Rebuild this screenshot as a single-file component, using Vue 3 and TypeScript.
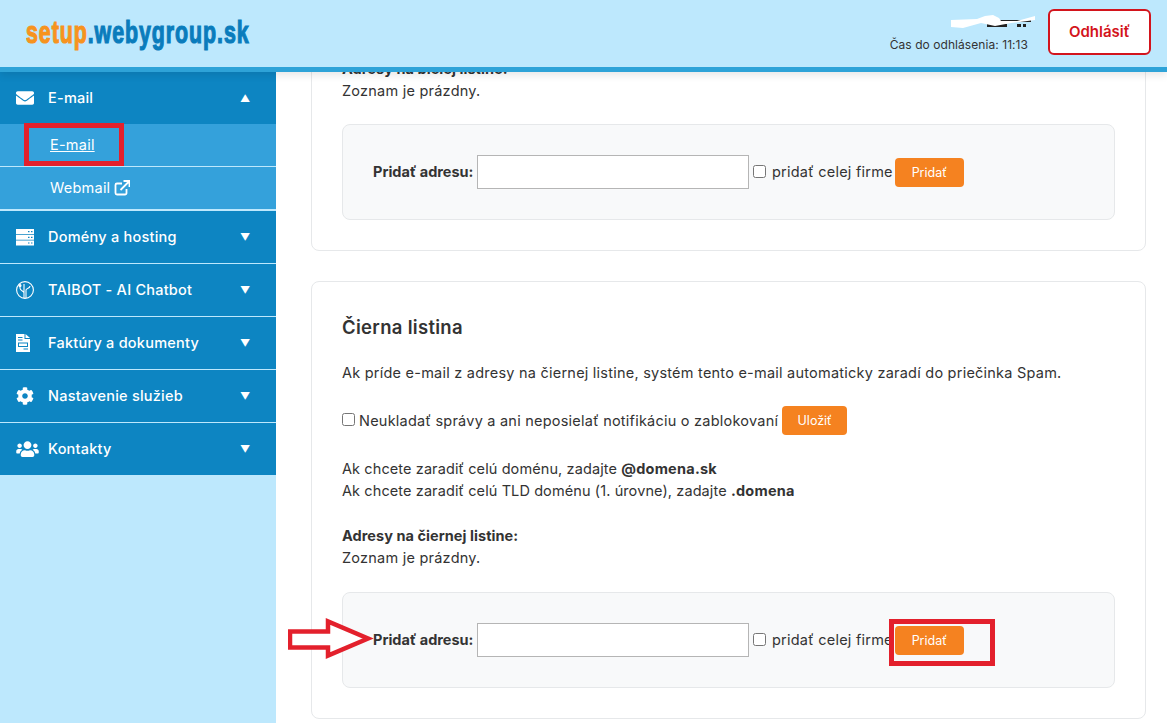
<script setup lang="ts">
interface MenuItem { label: string; icon: string }
const menus: MenuItem[] = [
  { label: 'Domény a hosting', icon: 'server' },
  { label: 'TAIBOT - AI Chatbot', icon: 'bot' },
  { label: 'Faktúry a dokumenty', icon: 'file' },
  { label: 'Nastavenie služieb', icon: 'cog' },
  { label: 'Kontakty', icon: 'users' },
]
</script>

<template>
  <div class="page">
    <header class="top">
      <div class="logo"><span class="o">setup</span><span class="b">.webygroup.sk</span></div>
      <div class="top-right">
        <div class="user">
          <svg class="redact" width="84" height="14" viewBox="0 0 84 14">
            <rect x="34" y="5" width="46" height="2" fill="#222" />
            <rect x="36" y="9" width="20" height="3" fill="#222" />
            <rect x="66" y="9" width="4" height="3" fill="#222" />
            <rect x="72" y="9" width="3" height="3" fill="#222" />
            <path d="M0 5 L26 4 L34 1 L42 0 L48 3 L50 6 L66 6 L84 1 L84 5 L60 8 L44 11 L30 8 L12 13 L0 12 Z" fill="#fff" />
          </svg>
          <div class="timer">Čas do odhlásenia: 11:13</div>
        </div>
        <button class="logout">Odhlásiť</button>
      </div>
    </header>

    <div class="body">
      <aside class="side">
        <div class="row">
          <svg class="ic" viewBox="0 0 512 512" fill="#fff"><path d="M502.3 190.8c3.9-3.1 9.7-.2 9.7 4.7V400c0 26.5-21.5 48-48 48H48c-26.5 0-48-21.5-48-48V195.6c0-5 5.7-7.8 9.7-4.7 22.4 17.4 52.1 39.5 154.1 113.6 21.1 15.4 56.7 47.8 92.2 47.6 35.7.3 72-32.8 92.3-47.6 102-74.1 131.6-96.3 154-113.7zM256 320c23.2.4 56.6-29.2 73.4-41.4 132.7-96.3 142.8-104.7 173.4-128.7 5.8-4.5 9.2-11.5 9.2-18.9v-19c0-26.5-21.5-48-48-48H48C21.5 64 0 85.5 0 112v19c0 7.4 3.4 14.3 9.2 18.9 30.6 23.9 40.7 32.4 173.4 128.7 16.8 12.2 50.2 41.8 73.4 41.4z" /></svg>
          <span class="lbl">E-mail</span>
          <span class="arr">▲</span>
        </div>
        <a class="sub u">E-mail</a>
        <a class="sub last">Webmail
          <svg class="ext" viewBox="0 0 16 16" fill="none" stroke="#fff" stroke-width="1.8"><path d="M8 3.5H3a1.5 1.5 0 0 0-1.5 1.5v8A1.5 1.5 0 0 0 3 14.5h8a1.5 1.5 0 0 0 1.5-1.5V9" /><path d="M6.500 10 15 1.500M9.500 1h6v6" /></svg>
        </a>
        <div v-for="m in menus" :key="m.label" class="row line">
          <svg v-if="m.icon === 'server'" class="ic" viewBox="0 0 18 18" fill="#fff">
            <path fill-rule="evenodd" d="M0 1h18v5.200H0zM12 3v1.200h1.500V3zM15 3v1.200h1.500V3zM0 7h18v4.800H0zM12 8.800v1.200h1.500V8.800zM15 8.800v1.200h1.500V8.800zM0 12.600h18v4.800H0zM12 14.400v1.200h1.500v-1.200zM15 14.400v1.200h1.500v-1.200z" />
          </svg>
          <svg v-else-if="m.icon === 'bot'" class="ic" viewBox="0 0 18 18" fill="none" stroke="#fff" stroke-width="1.100">
            <circle cx="9" cy="9" r="8.400" />
            <path d="M8 17V12C8 10 4 10 4 7V5M10 17V9C10 7 14 8 14 5M8 12V3" />
            <circle cx="4" cy="4.500" r="1" fill="#fff" />
          </svg>
          <svg v-else-if="m.icon === 'file'" class="ic" viewBox="2 0 18 18" fill="#fff">
            <path fill-rule="evenodd" d="M2 0h8.500v5H16v13H2zM11.500 0 16 4h-4.500zM4 3v1h4.500V3zM4 5.500v1h4.500v-1zM4 8.500v4.500h10V8.500zM5 9.500h8V12H5zM9.500 14.500v1H14v-1z" />
          </svg>
          <svg v-else-if="m.icon === 'cog'" class="ic" viewBox="0 0 512 512" fill="#fff"><path d="M487.4 315.7l-42.6-24.6c4.3-23.2 4.3-47 0-70.2l42.6-24.6c4.9-2.8 7.1-8.6 5.5-14-11.1-35.6-30-67.8-54.7-94.6-3.8-4.1-10-5.1-14.8-2.3L380.8 110c-17.9-15.4-38.5-27.3-60.8-35.1V25.8c0-5.6-3.9-10.5-9.4-11.7-36.7-8.2-74.3-7.8-109.2 0-5.5 1.2-9.4 6.1-9.4 11.7V75c-22.2 7.9-42.8 19.8-60.8 35.1L88.7 85.500c-4.9-2.8-11-1.900-14.8 2.300-24.7 26.7-43.6 58.9-54.7 94.6-1.7 5.4.6 11.2 5.5 14L67.3 221c-4.3 23.2-4.3 47 0 70.2l-42.6 24.6c-4.9 2.8-7.1 8.6-5.5 14 11.1 35.6 30 67.8 54.7 94.6 3.8 4.1 10 5.1 14.8 2.3l42.6-24.6c17.9 15.4 38.5 27.3 60.8 35.1v49.2c0 5.6 3.9 10.5 9.4 11.7 36.7 8.2 74.3 7.8 109.2 0 5.500-1.200 9.400-6.100 9.400-11.700v-49.200c22.200-7.900 42.800-19.800 60.800-35.100l42.600 24.600c4.900 2.800 11 1.900 14.800-2.300 24.700-26.700 43.600-58.900 54.700-94.600 1.500-5.500-.7-11.300-5.600-14.100zM256 336c-44.100 0-80-35.900-80-80s35.900-80 80-80 80 35.900 80 80-35.900 80-80 80z" /></svg>
          <svg v-else class="ic wide" viewBox="0 0 640 512" fill="#fff"><path d="M96 224c35.300 0 64-28.700 64-64s-28.700-64-64-64-64 28.700-64 64 28.700 64 64 64zm448 0c35.300 0 64-28.700 64-64s-28.700-64-64-64-64 28.700-64 64 28.700 64 64 64zm32 32h-64c-17.600 0-33.500 7.100-45.100 18.600 40.300 22.100 68.900 62 75.100 109.400h66c17.700 0 32-14.300 32-32v-32c0-35.300-28.700-64-64-64zm-256 0c61.900 0 112-50.100 112-112S381.900 32 320 32 208 82.100 208 144s50.100 112 112 112zm76.800 32h-8.300c-20.800 10-43.900 16-68.500 16s-47.600-6-68.500-16h-8.300C179.600 288 128 339.600 128 403.200V432c0 26.500 21.500 48 48 48h288c26.500 0 48-21.500 48-48v-28.800c0-63.600-51.600-115.200-115.200-115.200zm-223.700-13.400C161.500 263.100 145.600 256 128 256H64c-35.300 0-64 28.700-64 64v32c0 17.700 14.300 32 32 32h65.900c6.300-47.400 34.900-87.300 75.200-109.400z" /></svg>
          <span class="lbl">{{ m.label }}</span>
          <span class="arr">▼</span>
        </div>
      </aside>

      <main class="main">
        <section class="card first">
          <p><b>Adresy na bielej listine:</b><br />Zoznam je prázdny.</p>
          <div class="panel">
            <b class="lab">Pridať adresu:</b>
            <input class="inp" type="text" />
            <input class="chk" type="checkbox" />
            <span>pridať celej firme</span>
            <button class="btn">Pridať</button>
          </div>
        </section>

        <section class="card">
          <h2>Čierna listina</h2>
          <p>Ak príde e-mail z adresy na čiernej listine, systém tento e-mail automaticky zaradí do priečinka Spam.</p>
          <div class="opt">
            <input class="chk first-chk" type="checkbox" />
            <span>Neukladať správy a ani neposielať notifikáciu o zablokovaní</span>
            <button class="btn tall">Uložiť</button>
          </div>
          <p class="tight">Ak chcete zaradiť celú doménu, zadajte <b>@domena.sk</b><br />Ak chcete zaradiť celú TLD doménu (1. úrovne), zadajte <b>.domena</b></p>
          <p><b>Adresy na čiernej listine:</b><br />Zoznam je prázdny.</p>
          <div class="panel">
            <b class="lab">Pridať adresu:</b>
            <input class="inp" type="text" />
            <input class="chk" type="checkbox" />
            <span>pridať celej firme</span>
            <button class="btn">Pridať</button>
          </div>
        </section>
      </main>
    </div>

    <div class="mark m1"></div>
    <div class="mark m2"></div>
    <svg class="arrow" width="86" height="42" viewBox="0 0 86 42">
      <path d="M2 13.500H40V3.500L80 20.500 40 37.500V29.500H2Z" fill="#fff" stroke="#e3202c" stroke-width="4.500" />
    </svg>
  </div>
</template>

<style>
html, body { margin: 0; background: #fff; }
</style>

<style scoped>
* { box-sizing: border-box; }
.page {
  position: relative;
  width: 1167px;
  height: 723px;
  overflow: hidden;
  display: flex;
  flex-direction: column;
  font-family: "Inter", "Noto Sans", sans-serif;
  font-size: 14.500px;
  letter-spacing: .23px;
  line-height: 22px;
  color: #333;
}
.top {
  flex: none;
  height: 72px;
  background: #bde8fd;
  border-bottom: 5px solid #2ea3d8;
  display: flex;
  align-items: center;
  justify-content: space-between;
  padding: 0 16px 0 26px;
  box-shadow: 0 3px 8px rgba(0, 0, 0, .1);
  position: relative;
  z-index: 2;
}
.logo {
  font-family: "Liberation Sans", sans-serif;
  font-weight: 700;
  font-size: 31px;
  letter-spacing: 1.350px;
  -webkit-text-stroke: 1.200px currentColor;
  line-height: 30px;
  margin-top: -1px;
  white-space: nowrap;
  transform: scaleX(.69);
  transform-origin: left center;
}
.o { color: #f7931e; }
.b { color: #0a7cbc; }
.top-right { display: flex; align-items: center; gap: 20px; }
.user { display: flex; flex-direction: column; align-items: flex-end; gap: 8px; }
.redact { margin-right: -7px; display: block; }
.timer { font-size: 12px; letter-spacing: .06px; line-height: 16px; color: #333; white-space: nowrap; }
.logout {
  width: 103px;
  height: 46px;
  margin-top: -4px;
  background: #fff;
  border: 2px solid #d3141c;
  border-radius: 6px;
  color: #d3141c;
  font: 600 15px "Inter", sans-serif;
}
.body { flex: 1; display: flex; min-height: 0; }
.side { flex: none; width: 276px; background: #bde8fd; }
.row {
  height: 52px;
  background: #0d85c2;
  color: #fff;
  display: flex;
  align-items: center;
  padding: 0 26px 0 16px;
  font-weight: 500;
}
.line { height: 53px; border-bottom: 1px solid #bde8fd; }
.line:last-child { border-bottom: 0; height: 52px; }
.ic { width: 18px; height: 18px; flex: none; }
.ic.wide { width: 23px; margin-right: -5px; }
.lbl { margin-left: 14px; flex: 1; }
.arr { font-size: 10px; width: 10px; text-align: center; line-height: 1; }
.sub {
  display: flex;
  align-items: center;
  height: 43px;
  padding-left: 50px;
  background: #34a1db;
  color: #fff;
  border-bottom: 1px solid #bde8fd;
  gap: 4px;
}
.sub.last { height: 44px; border-bottom-width: 2px; }
.u { text-decoration: underline; }
.ext { width: 16px; height: 16px; }
.main { flex: 1; min-width: 0; padding: 0 21px 0 35px; background: #fff; display: flex; flex-direction: column; gap: 30px; }
.card {
  flex: none;
  background: #fff;
  border: 1px solid #e6e8ea;
  border-radius: 8px;
  padding: 30px;
  display: flex;
  flex-direction: column;
  gap: 23px;
}
.card.first { margin-top: -15px; padding-top: 0; gap: 22px; }
p { margin: 0; }
p b { letter-spacing: .05px; }
.tight { letter-spacing: .1px; }
.tight b { letter-spacing: .23px; }
h2 { margin: 1px 0 -2px; font-size: 18.500px; letter-spacing: .3px; line-height: 28px; font-weight: 600; color: #333; }
.opt { display: flex; align-items: center; height: 29px; margin-top: -1px; }
.panel {
  height: 96px;
  background: #f8f9fa;
  border: 1px solid #e6e8ea;
  border-radius: 8px;
  padding: 0 30px;
  display: flex;
  align-items: center;
}
.lab { width: 100px; letter-spacing: 0; white-space: nowrap; flex: none; }
.inp {
  width: 272px;
  height: 34px;
  margin: 0 4px 0 4px;
  border: 1px solid #b5b5b5;
  background: #fff;
  padding: 0 4px;
}
.chk { width: 13px; height: 13px; margin: 0 5px 2px 0; flex: none; }
.panel .chk { margin-right: 6px; }
.first-chk { margin-right: 4px; }
.btn {
  margin-left: 4px;
  width: 69px;
  height: 29px;
  border: 0;
  border-radius: 4px;
  background: #f58220;
  color: #fff;
  font: 400 12.500px "Inter", sans-serif;
}
.panel .btn { margin-left: 2px; }
.tall { width: 65px; }
.mark { position: absolute; border: 5px solid #e3202c; pointer-events: none; }
.m1 { left: 24px; top: 123px; width: 100px; height: 43px; }
.m2 { left: 889px; top: 619px; width: 106px; height: 47px; }
.arrow { position: absolute; left: 288px; top: 618px; }
</style>
